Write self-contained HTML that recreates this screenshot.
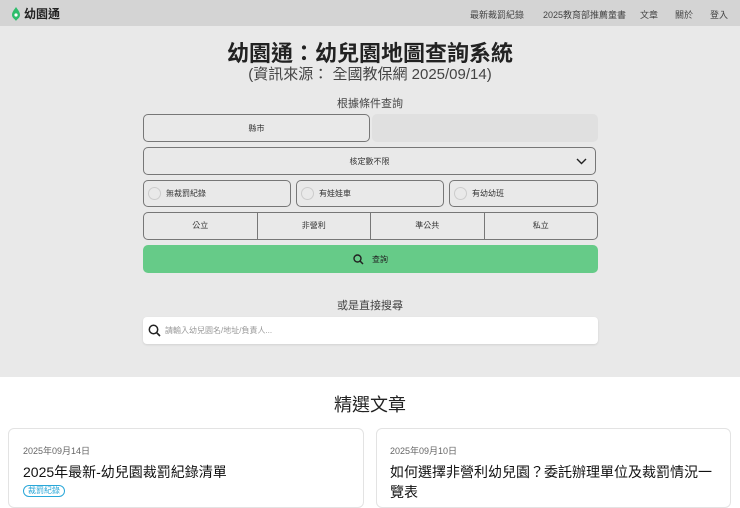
<!DOCTYPE html>
<html><head><meta charset="utf-8"><style>
*{box-sizing:border-box;margin:0;padding:0}
body{width:740px;height:499px;overflow:hidden;font-family:"Liberation Sans","Noto Sans CJK TC",sans-serif;background:#fff;color:#222}
.nav{height:26px;background:#d4d4d4;position:relative;font-size:9px;color:#444}
.logo{position:absolute;left:12px;top:5px;font-size:12px;font-weight:bold;color:#222;display:flex;align-items:center;gap:4px}
.nav span{position:absolute;top:8px}
.hero{background:#e9e9e9;height:351px;position:relative}
.c{position:absolute;left:0;right:0;text-align:center}
.box{position:absolute;border:1px solid #777;border-radius:5px;font-size:8px;color:#333;display:flex;align-items:center;justify-content:center}
.cb{justify-content:flex-start;padding-left:4px}
.cb i{width:13px;height:13px;border:1px solid #ccc;border-radius:50%;margin-right:5px;display:inline-block}
.card{position:absolute;top:428px;height:80px;border:1px solid #e3e3e3;border-radius:6px;background:#fff}
</style></head><body>
<div class="nav">
<div class="logo"><svg width="8" height="14" viewBox="0 0 8 14"><path d="M4 0C6 3 8 5 8 8C8 11 5 12 4 14C3 12 0 11 0 8C0 5 2 3 4 0Z" fill="#2ebd6b"/><circle cx="4" cy="8" r="1.6" fill="#fff"/></svg>幼園通</div>
<span style="left:470px">最新裁罰紀錄</span><span style="left:543px">2025教育部推薦童書</span><span style="left:640px">文章</span><span style="left:675px">關於</span><span style="left:710px">登入</span>
</div>
<div class="hero">
<div class="c" style="top:10px;font-size:22px;font-weight:bold;color:#222">幼園通：幼兒園地圖查詢系統</div>
<div class="c" style="top:37px;font-size:15px;color:#444">(資訊來源： 全國教保網 2025/09/14)</div>
<div class="c" style="top:69px;font-size:11px;color:#444">根據條件查詢</div>
<div class="box" style="left:143px;top:88px;width:227px;height:28px">縣市</div>
<div style="position:absolute;left:372px;top:88px;width:226px;height:28px;background:#e0e0e0;border-radius:5px"></div>
<div class="box" style="left:143px;top:121px;width:453px;height:28px">核定數不限<svg style="position:absolute;right:8px;top:10px" width="11" height="7" viewBox="0 0 11 7"><path d="M1 1L5.5 5.5L10 1" stroke="#222" stroke-width="1.4" fill="none"/></svg></div>
<div class="box cb" style="left:143px;top:154px;width:148px;height:27px"><i></i>無裁罰紀錄</div>
<div class="box cb" style="left:296px;top:154px;width:148px;height:27px"><i></i>有娃娃車</div>
<div class="box cb" style="left:449px;top:154px;width:149px;height:27px"><i></i>有幼幼班</div>
<div class="box" style="left:143px;top:186px;width:455px;height:28px;justify-content:stretch">
<div style="flex:1;text-align:center;border-right:1px solid #777;height:100%;line-height:26px">公立</div><div style="flex:1;text-align:center;border-right:1px solid #777;height:100%;line-height:26px">非營利</div><div style="flex:1;text-align:center;border-right:1px solid #777;height:100%;line-height:26px">準公共</div><div style="flex:1;text-align:center;line-height:26px">私立</div></div>
<div style="position:absolute;left:143px;top:219px;width:455px;height:28px;background:#66cb88;border-radius:5px;display:flex;align-items:center;justify-content:center;font-size:8px;color:#222"><svg width="11" height="11" viewBox="0 0 11 11" style="margin-right:8px"><circle cx="4.5" cy="4.5" r="3.5" stroke="#222" stroke-width="1.4" fill="none"/><path d="M7 7L10 10" stroke="#222" stroke-width="1.5"/></svg>查詢</div>
<div class="c" style="top:271px;font-size:11px;color:#444">或是直接搜尋</div>
<div style="position:absolute;left:143px;top:291px;width:455px;height:27px;background:#fff;border-radius:4px;display:flex;align-items:center;padding-left:5px;font-size:8px;color:#999;box-shadow:0 1px 2px rgba(0,0,0,.1)"><svg width="13" height="13" viewBox="0 0 13 13" style="margin-right:4px"><circle cx="5.5" cy="5.5" r="4.2" stroke="#222" stroke-width="1.5" fill="none"/><path d="M8.5 8.5L12 12" stroke="#222" stroke-width="1.6"/></svg>請輸入幼兒園名/地址/負責人...</div>
</div>
<div class="c" style="top:391px;font-size:18px;color:#222">精選文章</div>
<div class="card" style="left:8px;width:356px">
<div style="position:absolute;left:14px;top:15px;font-size:9px;color:#666">2025年09月14日</div>
<div style="position:absolute;left:14px;top:33px;font-size:14px;color:#111">2025年最新-幼兒園裁罰紀錄清單</div>
<div style="position:absolute;left:14px;top:56px;font-size:8px;color:#2aa7d8;border:1px solid #2aa7d8;border-radius:7px;padding:0 4px;line-height:10px">裁罰紀錄</div>
</div>
<div class="card" style="left:376px;width:355px">
<div style="position:absolute;left:13px;top:15px;font-size:9px;color:#666">2025年09月10日</div>
<div style="position:absolute;left:13px;top:33px;width:330px;font-size:14px;line-height:20px;color:#111">如何選擇非營利幼兒園？委託辦理單位及裁罰情況一覽表</div>
</div>
</body></html>
